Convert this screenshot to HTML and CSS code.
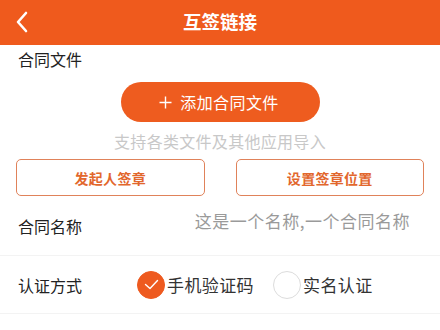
FILE: index.html
```html
<!DOCTYPE html>
<html lang="zh">
<head>
<meta charset="utf-8">
<link rel="stylesheet" href="styles.css">
</head>
<body>
<header class="topbar">
  <svg class="back" width="14" height="22" viewBox="0 0 14 22"><path d="M11 2 L3 11 L11 20" fill="none" stroke="#fff" stroke-width="2.6" stroke-linecap="round" stroke-linejoin="round"/></svg>
  <h1 class="title">互签链接</h1>
</header>
<main>
  <div class="section-label">合同文件</div>
  <div class="add-wrap">
    <button class="add-btn"><svg class="plus" width="13" height="13" viewBox="0 0 13 13"><path d="M6.5 0.5 V12.5 M0.5 6.5 H12.5" stroke="#fff" stroke-width="1.4"/></svg>添加合同文件</button>
  </div>
  <p class="hint">支持各类文件及其他应用导入</p>
  <div class="actions">
    <button class="outline-btn">发起人签章</button>
    <button class="outline-btn">设置签章位置</button>
  </div>
  <div class="row row-name">
    <span class="label">合同名称</span>
    <span class="value">这是一个名称,一个合同名称</span>
  </div>
  <div class="row row-auth">
    <span class="label">认证方式</span>
    <div class="options">
      <span class="option"><span class="radio checked"><svg width="15" height="11" viewBox="0 0 15 11"><path d="M1.5 5.5 L6 9.5 L13.5 1.5" fill="none" stroke="#fff" stroke-width="1.4" stroke-linecap="round" stroke-linejoin="round"/></svg></span>手机验证码</span>
      <span class="option"><span class="radio"></span>实名认证</span>
    </div>
  </div>
</main>
</body>
</html>
```
FILE: styles.css
```css
* { box-sizing: border-box; margin: 0; padding: 0; }
body {
  width: 440px;
  height: 330px;
  overflow: hidden;
  background: #fff;
  font-family: "Noto Sans CJK SC", "Noto Sans", sans-serif;
  color: #222;
}
.topbar {
  height: 45px;
  background: #ef5a1d;
  display: flex;
  align-items: center;
  justify-content: center;
  position: relative;
}
.back { position: absolute; left: 15px; top: 11px; }
.title {
  color: #fff;
  font-size: 18.5px;
  font-weight: 700;
  line-height: 1;
  margin-top: -2px;
}
.section-label {
  font-size: 16px;
  line-height: 20px;
  padding: 4px 0 0 18px;
  height: 37px;
}
.add-wrap { display: flex; justify-content: center; }
.add-btn {
  width: 199px;
  height: 40px;
  border: none;
  border-radius: 20px;
  background: #ee5c1f;
  color: #fff;
  font-family: inherit;
  font-size: 16px;
  letter-spacing: 0.4px;
  display: flex;
  align-items: center;
  justify-content: center;
  gap: 8px;
}
.plus { margin-left: -2px; }
.hint {
  text-align: center;
  color: #c8c8c8;
  font-size: 16px;
  letter-spacing: 0.3px;
  line-height: 20px;
  margin-top: 9px;
  height: 28px;
}
.actions {
  display: flex;
  gap: 31px;
  padding: 0 16px;
}
.outline-btn {
  flex: 1;
  height: 37px;
  border: 1.5px solid #e0825a;
  border-radius: 5px;
  background: #fff;
  color: #e2672d;
  font-family: inherit;
  font-weight: 700;
  font-size: 14px;
  letter-spacing: 0.3px;
}
.row {
  display: flex;
  align-items: center;
  border-bottom: 1px solid #f3f3f3;
  padding: 0 18px;
}
.row-name { height: 60px; }
.row-auth { height: 58px; }
.label { font-size: 16px; width: 119px; flex-shrink: 0; }
.value {
  margin-left: auto;
  margin-right: 12px;
  margin-top: -10px;
  color: #9a9a9a;
  font-size: 17px;
  letter-spacing: 0.5px;
}
.options { display: flex; align-items: center; gap: 19px; }
.option {
  display: flex;
  align-items: center;
  font-size: 17px;
  letter-spacing: 0.4px;
  color: #333;
}
.radio {
  width: 28px;
  height: 28px;
  border-radius: 50%;
  border: 1px solid #dcdcdc;
  display: flex;
  align-items: center;
  justify-content: center;
  margin-right: 2px;
}
.radio.checked { background: #ee5a1f; border-color: #ee5a1f; }
```
